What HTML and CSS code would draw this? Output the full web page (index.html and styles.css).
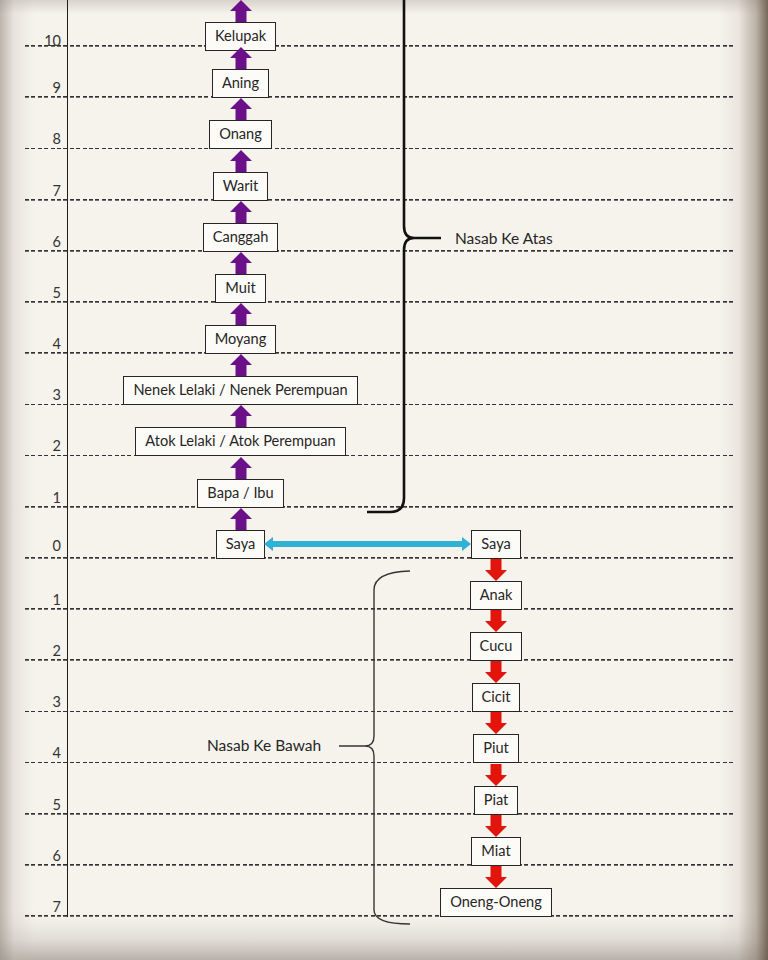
FILE: index.html
```html
<!DOCTYPE html>
<html lang="ms">
<head>
<meta charset="utf-8">
<title>Nasab</title>
<link rel="stylesheet" href="styles.css">
</head>
<body>
<div class="page">
  <div class="chart">
    <div class="row first">
      <div class="num">10</div>
      <div class="cell"><svg class="arr up" viewBox="0 0 22 22"><polygon points="11,0 22,11 16.5,11 16.5,22 5.5,22 5.5,11 0,11"/></svg><div class="box">Kelupak</div></div>
      <div class="cell"></div>
    </div>
    <div class="row">
      <div class="num">9</div>
      <div class="cell"><svg class="arr up" viewBox="0 0 22 22"><polygon points="11,0 22,11 16.5,11 16.5,22 5.5,22 5.5,11 0,11"/></svg><div class="box">Aning</div></div>
      <div class="cell"></div>
    </div>
    <div class="row">
      <div class="num">8</div>
      <div class="cell"><svg class="arr up" viewBox="0 0 22 22"><polygon points="11,0 22,11 16.5,11 16.5,22 5.5,22 5.5,11 0,11"/></svg><div class="box">Onang</div></div>
      <div class="cell"></div>
    </div>
    <div class="row">
      <div class="num">7</div>
      <div class="cell"><svg class="arr up" viewBox="0 0 22 22"><polygon points="11,0 22,11 16.5,11 16.5,22 5.5,22 5.5,11 0,11"/></svg><div class="box">Warit</div></div>
      <div class="cell"></div>
    </div>
    <div class="row">
      <div class="num">6</div>
      <div class="cell"><svg class="arr up" viewBox="0 0 22 22"><polygon points="11,0 22,11 16.5,11 16.5,22 5.5,22 5.5,11 0,11"/></svg><div class="box">Canggah</div></div>
      <div class="cell"></div>
    </div>
    <div class="row">
      <div class="num">5</div>
      <div class="cell"><svg class="arr up" viewBox="0 0 22 22"><polygon points="11,0 22,11 16.5,11 16.5,22 5.5,22 5.5,11 0,11"/></svg><div class="box">Muit</div></div>
      <div class="cell"></div>
    </div>
    <div class="row">
      <div class="num">4</div>
      <div class="cell"><svg class="arr up" viewBox="0 0 22 22"><polygon points="11,0 22,11 16.5,11 16.5,22 5.5,22 5.5,11 0,11"/></svg><div class="box">Moyang</div></div>
      <div class="cell"></div>
    </div>
    <div class="row">
      <div class="num">3</div>
      <div class="cell"><svg class="arr up" viewBox="0 0 22 22"><polygon points="11,0 22,11 16.5,11 16.5,22 5.5,22 5.5,11 0,11"/></svg><div class="box wide">Nenek Lelaki / Nenek Perempuan</div></div>
      <div class="cell"></div>
    </div>
    <div class="row">
      <div class="num">2</div>
      <div class="cell"><svg class="arr up" viewBox="0 0 22 22"><polygon points="11,0 22,11 16.5,11 16.5,22 5.5,22 5.5,11 0,11"/></svg><div class="box wide">Atok Lelaki / Atok Perempuan</div></div>
      <div class="cell"></div>
    </div>
    <div class="row">
      <div class="num">1</div>
      <div class="cell"><svg class="arr up" viewBox="0 0 22 22"><polygon points="11,0 22,11 16.5,11 16.5,22 5.5,22 5.5,11 0,11"/></svg><div class="box">Bapa / Ibu</div></div>
      <div class="cell"></div>
    </div>
    <div class="row self">
      <div class="num mid">0</div>
      <div class="cell"><svg class="arr up" viewBox="0 0 22 22"><polygon points="11,0 22,11 16.5,11 16.5,22 5.5,22 5.5,11 0,11"/></svg><div class="box">Saya</div></div>
      <div class="cell"><div class="box">Saya</div></div>
      <svg class="link" viewBox="0 0 207 14" preserveAspectRatio="none"><polygon points="0,7 9,0 9,4 198,4 198,0 207,7 198,14 198,10 9,10 9,14"/></svg>
    </div>
    <div class="row">
      <div class="num">1</div>
      <div class="cell"></div>
      <div class="cell"><svg class="arr down" viewBox="0 0 22 22"><polygon points="5.5,0 16.5,0 16.5,11 22,11 11,22 0,11 5.5,11"/></svg><div class="box">Anak</div></div>
    </div>
    <div class="row">
      <div class="num">2</div>
      <div class="cell"></div>
      <div class="cell"><svg class="arr down" viewBox="0 0 22 22"><polygon points="5.5,0 16.5,0 16.5,11 22,11 11,22 0,11 5.5,11"/></svg><div class="box">Cucu</div></div>
    </div>
    <div class="row">
      <div class="num">3</div>
      <div class="cell"></div>
      <div class="cell"><svg class="arr down" viewBox="0 0 22 22"><polygon points="5.5,0 16.5,0 16.5,11 22,11 11,22 0,11 5.5,11"/></svg><div class="box">Cicit</div></div>
    </div>
    <div class="row">
      <div class="num">4</div>
      <div class="cell"></div>
      <div class="cell"><svg class="arr down" viewBox="0 0 22 22"><polygon points="5.5,0 16.5,0 16.5,11 22,11 11,22 0,11 5.5,11"/></svg><div class="box">Piut</div></div>
    </div>
    <div class="row">
      <div class="num">5</div>
      <div class="cell"></div>
      <div class="cell"><svg class="arr down" viewBox="0 0 22 22"><polygon points="5.5,0 16.5,0 16.5,11 22,11 11,22 0,11 5.5,11"/></svg><div class="box">Piat</div></div>
    </div>
    <div class="row">
      <div class="num">6</div>
      <div class="cell"></div>
      <div class="cell"><svg class="arr down" viewBox="0 0 22 22"><polygon points="5.5,0 16.5,0 16.5,11 22,11 11,22 0,11 5.5,11"/></svg><div class="box">Miat</div></div>
    </div>
    <div class="row">
      <div class="num">7</div>
      <div class="cell"></div>
      <div class="cell"><svg class="arr down" viewBox="0 0 22 22"><polygon points="5.5,0 16.5,0 16.5,11 22,11 11,22 0,11 5.5,11"/></svg><div class="box">Oneng-Oneng</div></div>
    </div>
  </div>

  <svg class="braces" viewBox="0 0 768 960">
    <path class="brace-up" d="M404,-5 V226 Q404,238 414,238 H441 M414,238 Q404,238 404,250 V498 Q404,512 390,512 H367"/>
    <path class="brace-down" d="M410,571 Q374,572 374,590 V736 Q374,746 365,746 H339 M365,746 Q374,746 374,756 V910 Q374,924 410,924"/>
  </svg>
  <div class="label label-up">Nasab Ke Atas</div>
  <div class="label label-down">Nasab Ke Bawah</div>
</div>
</body>
</html>
```

FILE: styles.css
```css
* { box-sizing: border-box; }
html, body { margin: 0; padding: 0; }
body {
  width: 768px;
  height: 960px;
  overflow: hidden;
  font-family: "Lato", "Open Sans", sans-serif;
  color: #262626;
  background-color: #f6f3ed;
  background-image:
    linear-gradient(to left, rgba(105, 90, 75, 0.9) 0, rgba(140, 125, 110, 0.55) 12px, rgba(190, 180, 168, 0.2) 30px, rgba(220, 212, 204, 0) 50px),
    linear-gradient(to right, rgba(150, 140, 130, 0.6) 0, rgba(190, 182, 172, 0.25) 14px, rgba(220, 212, 204, 0) 34px),
    linear-gradient(to top, rgba(150, 142, 134, 0.65) 0, rgba(190, 184, 178, 0.4) 20px, rgba(215, 210, 204, 0.2) 36px, rgba(230, 226, 220, 0) 50px),
    linear-gradient(to bottom, rgba(180, 172, 164, 0.45) 0, rgba(220, 214, 206, 0) 14px);
}
.page {
  position: relative;
  width: 768px;
  height: 960px;
}
.chart {
  display: flex;
  flex-direction: column;
}
.row {
  position: relative;
  display: grid;
  grid-template-columns: 68px 345px 166px;
  height: 51.18px;
  background-image: repeating-linear-gradient(to right, #333 0 4px, transparent 4px 6.4px);
  background-repeat: no-repeat;
  background-position: 25px 100%;
  background-size: 710px 1.7px;
}
.row.first { height: 47px; }
.num {
  display: flex;
  align-items: flex-end;
  justify-content: flex-end;
  padding: 0 6px 2px 0;
  border-right: 1.6px solid #1e1e1e;
  font-size: 14.5px;
  line-height: 16px;
  color: #333;
}
.num.mid { padding-bottom: 5px; }
.cell {
  display: flex;
  flex-direction: column;
  align-items: center;
  justify-content: flex-end;
}
.arr {
  display: block;
  width: 22px;
  height: 22px;
  flex: none;
}
.arr.up { fill: #6b1089; }
.arr.down { fill: #e3140c; }
.box {
  height: 29px;
  flex: none;
  padding: 0 9px;
  border: 1.3px solid #262626;
  background: #fcfbf7;
  font-size: 14.6px;
  line-height: 26px;
  white-space: nowrap;
  color: #262626;
}
.box.wide { padding: 0 9px; }
.link {
  position: absolute;
  left: 264px;
  top: 29.5px;
  width: 207px;
  height: 14px;
  fill: #2fb2d6;
}
.braces {
  position: absolute;
  left: 0;
  top: 0;
  width: 768px;
  height: 960px;
  pointer-events: none;
  fill: none;
}
.brace-up { stroke: #111; stroke-width: 2.6; }
.brace-down { stroke: #3a3530; stroke-width: 1.4; }
.label {
  position: absolute;
  font-size: 15.5px;
  line-height: 18px;
  color: #262626;
  white-space: nowrap;
}
.label-up { left: 455px; top: 229px; }
.label-down { left: 207px; top: 736px; }
```
